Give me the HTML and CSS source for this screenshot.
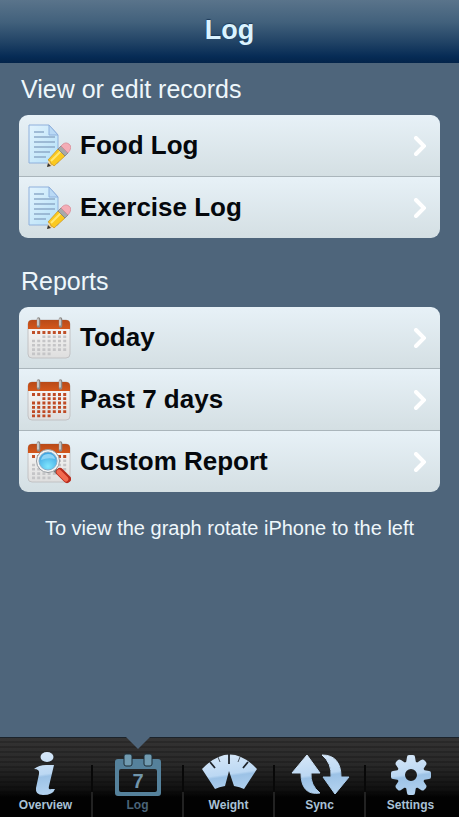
FILE: index.html
```html
<!doctype html>
<html lang="en">
  <head>
    <meta charset="utf-8">
    <meta name="viewport" content="width=device-width, initial-scale=1">
    <title>Log</title>
    <link rel="stylesheet" href="styles.css">
  </head>
  <body>
    <!-- shared drawings -->
    <svg class="defs" width="0" height="0" aria-hidden="true">
      <defs>
        <linearGradient id="paper" x1="0" y1="0" x2="1" y2="1">
          <stop offset="0" stop-color="#e2f3fd"/>
          <stop offset="1" stop-color="#b4e0f8"/>
        </linearGradient>
        <linearGradient id="orange" x1="0" y1="0" x2="0" y2="1">
          <stop offset="0" stop-color="#b84a18"/>
          <stop offset="1" stop-color="#d4571b"/>
        </linearGradient>
        <linearGradient id="page" x1="0" y1="0" x2="0" y2="1">
          <stop offset="0" stop-color="#fbfaf9"/>
          <stop offset="1" stop-color="#dedede"/>
        </linearGradient>
        <radialGradient id="lens" cx=".5" cy=".8" r=".8">
          <stop offset="0" stop-color="#7fe6fd"/>
          <stop offset="1" stop-color="#3a9fe0"/>
        </radialGradient>
        <linearGradient id="glyph" gradientUnits="userSpaceOnUse" x1="26" y1="2" x2="32" y2="44">
          <stop offset="0" stop-color="#d6e7f8"/>
          <stop offset=".5" stop-color="#bcd8f3"/>
          <stop offset=".56" stop-color="#9cc2e6"/>
          <stop offset="1" stop-color="#b4d3f0"/>
        </linearGradient>
        <symbol id="note" viewBox="0 0 44 44">
          <path d="M2 1h20l9 10v28H2z" fill="url(#paper)" stroke="#8fb0dc"/>
          <path d="M22 1v10h9z" fill="#b9d9f5" stroke="#8fb0dc" stroke-linejoin="round"/>
          <path d="M7 8h10M7 13h21M7 18h21M7 23h21M7 28h16M7 33h12" stroke="#8dabc9" stroke-width="1.3" fill="none"/>
          <path d="M20 43l2-8 7 6z" fill="#f3d6a0"/>
          <path d="M20 43l1-4 3 3z" fill="#333"/>
          <path d="M21 36L31 25l7 7-11 10q-1-2-3-2 0-3-3-4z" fill="#fbc91f" stroke="#c8901c" stroke-width=".7"/>
          <path d="M24 37l10-10" stroke="#ffe873" stroke-width="2"/>
          <path d="M31 25l3-3 7 7-3 3z" fill="#a8a9aa" stroke="#77797c" stroke-width=".7"/>
          <path d="M34 22q4-5 8-2t-1 9z" fill="#f4adb6" stroke="#d98590" stroke-width=".7"/>
        </symbol>
        <symbol id="calendar" viewBox="0 0 44 44">
          <rect x="1" y="4" width="42" height="38" rx="4" fill="url(#page)" stroke="#c2c2c4"/>
          <path d="M1 13V8q0-4 4-4h34q4 0 4 4v5z" fill="url(#orange)"/>
          <path d="M11.500 3v7M33.500 3v7" stroke="#8c8a88" stroke-width="3.500" stroke-linecap="round"/>
          <path d="M11 3v6M33 3v6" stroke="#dad9d8" stroke-width="1.500" stroke-linecap="round"/>
        </symbol>
        <symbol id="today" viewBox="0 0 44 44">
          <use href="#calendar"/>
          <path d="M5 16.500h35" stroke="#c04f27" stroke-width="3" stroke-dasharray="3 2.200"/>
          <path d="M15.400 20.700H40M5 25h35M5 29.300h35M5 33.600h35M5 37.900h19" stroke="#c5c5c7" stroke-width="2.600" stroke-dasharray="3 2.200"/>
        </symbol>
        <symbol id="week" viewBox="0 0 44 44">
          <use href="#calendar"/>
          <path d="M5 16.500h35M15.400 20.700H40M5 25h35M5 29.300h35M5 33.600h35M5 37.900h19" stroke="#bf4a24" stroke-width="2.800" stroke-dasharray="3 2.200"/>
        </symbol>
        <symbol id="custom" viewBox="0 0 44 44">
          <use href="#today"/>
          <path d="M27 29l4 4" stroke="#777" stroke-width="4"/>
          <path d="M33 32l7 7" stroke="#b82c1d" stroke-width="8" stroke-linecap="round"/>
          <path d="M32 32l7 7" stroke="#f26a50" stroke-width="5" stroke-linecap="round"/>
          <circle cx="21" cy="21" r="11.500" fill="#f4f4f4" stroke="#959a9f"/>
          <circle cx="21" cy="21" r="9" fill="url(#lens)" stroke="#82aecb"/>
          <path d="M14 20q1-6 7-6 6 0 7 5-7-2-14 1z" fill="#8fd4f6"/>
        </symbol>
      </defs>
    </svg>

    <header>
      <h1>Log</h1>
    </header>

    <main>
      <h2>View or edit records</h2>
      <ul class="list">
        <li><a href="#food"><svg class="icon"><use href="#note"/></svg>Food Log<svg class="chevron" viewBox="0 0 12 20"><path d="M2 2l8 8-8 8"/></svg></a></li>
        <li><a href="#exercise"><svg class="icon"><use href="#note"/></svg>Exercise Log<svg class="chevron" viewBox="0 0 12 20"><path d="M2 2l8 8-8 8"/></svg></a></li>
      </ul>

      <h2 class="next">Reports</h2>
      <ul class="list">
        <li><a href="#today-report"><svg class="icon"><use href="#today"/></svg>Today<svg class="chevron" viewBox="0 0 12 20"><path d="M2 2l8 8-8 8"/></svg></a></li>
        <li><a href="#week-report"><svg class="icon"><use href="#week"/></svg>Past 7 days<svg class="chevron" viewBox="0 0 12 20"><path d="M2 2l8 8-8 8"/></svg></a></li>
        <li><a href="#custom-report"><svg class="icon"><use href="#custom"/></svg>Custom Report<svg class="chevron" viewBox="0 0 12 20"><path d="M2 2l8 8-8 8"/></svg></a></li>
      </ul>

      <p class="hint">To view the graph rotate iPhone to the left</p>
    </main>

    <nav>
      <a href="#overview">
        <svg viewBox="0 0 60 46" fill="url(#glyph)">
          <ellipse cx="31" cy="6" rx="6.500" ry="5"/>
          <path d="M18 18q5-4 12-4h8l-5 21q-1 4 2 3h4q-2 6-12 6-8 0-7-7l3-14q1-5-5-5z"/>
        </svg>
        Overview
      </a>
      <a href="#log" class="active">
        <svg viewBox="0 0 60 46">
          <path fill-rule="evenodd" d="M10 8h40q3 0 3 3v31q0 3-3 3H10q-3 0-3-3V11q0-3 3-3zm3 10q-2 0-2 2v19q0 2 2 2h34q2 0 2-2V20q0-2-2-2z" fill="#55819b"/>
          <rect x="16" y="3" width="8" height="12" rx="2" fill="#719bb0" stroke="#1d2d37"/>
          <rect x="36" y="3" width="8" height="12" rx="2" fill="#719bb0" stroke="#1d2d37"/>
          <text class="day" x="30" y="37" text-anchor="middle">7</text>
        </svg>
        Log
      </a>
      <a href="#weight">
        <svg viewBox="0 0 60 46">
          <path d="M3 18Q31-11 58 18L45 38q-4-2-10-3L30 20l-4 15q-6 1-10 3z" fill="url(#glyph)"/>
          <path d="M11 11l5 6M49 11l-5 6M30 3v10" stroke="#20242a" stroke-width="1.800"/>
          <path d="M19 6l2 5M41 6l-2 5" stroke="#4b5560"/>
        </svg>
        Weight
      </a>
      <a href="#sync">
        <svg viewBox="0 0 60 46" fill="url(#glyph)">
          <path d="M17 4l13 18h-9q-1 12 9 20-19 3-19-20H2z" stroke="url(#glyph)" stroke-linejoin="round"/>
          <path d="M32 4q19 0 19 22h8L45 43 33 26h8q1-14-9-22z" stroke="url(#glyph)" stroke-linejoin="round"/>
        </svg>
        Sync
      </a>
      <a href="#settings">
        <svg viewBox="0 0 60 46" fill="url(#glyph)">
          <path d="M26 6q0-2 2-2h4q2 0 2 2l1 6h-10zM26 42q0 2 2 2h4q2 0 2-2l1-6h-10zM12 20q-2 0-2 2v4q0 2 2 2l6 1V19zM48 20q2 0 2 2v4q0 2-2 2l-6 1V19z"/>
          <path d="M20 9q-2-1-3 0l-2 2q-1 2 0 3l4 6 7-7zM40 9q2-1 3 0l2 2q1 2 0 3l-4 6-7-7zM20 39q-2 1-3 0l-2-2q-1-2 0-3l4-6 7 7zM40 39q2 1 3 0l2-2q1-2 0-3l-4-6-7 7z"/>
          <circle cx="30" cy="24" r="10" fill="none" stroke="url(#glyph)" stroke-width="8"/>
        </svg>
        Settings
      </a>
    </nav>
  </body>
</html>
```
FILE: styles.css
```css
* {
  box-sizing: border-box;
}
body {
  margin: 0;
  min-height: 100vh;
  display: flex;
  flex-direction: column;
  background: #4e657b;
  color: #eef7fb;
  font-family: "Liberation Sans", Arial, sans-serif;
}
a {
  color: inherit;
  text-decoration: none;
}
.defs {
  position: absolute;
}

header {
  height: 63px;
  background: linear-gradient(#5a748b, #42617c 35%, #234567 65%, #062b55 90%, #03244a);
  text-align: center;
}
h1 {
  margin: 0;
  color: #daf3ff;
  font-size: 27px;
  line-height: 61px;
  text-shadow: 0 -1px 1px #1c3958;
}

main {
  flex: 1;
  padding: 0 19px;
}
h2 {
  margin: 0 2px;
  font-size: 25px;
  font-weight: normal;
  line-height: 52px;
}
.next {
  margin-top: 17px;
}

.list {
  margin: 0;
  padding: 0;
  list-style: none;
  border-radius: 9px;
  overflow: hidden;
  color: #05080c;
}
.list li + li {
  border-top: 1px solid #aab5bb;
}
.list a {
  display: flex;
  align-items: center;
  height: 61px;
  padding: 0 14px 0 8px;
  background: linear-gradient(#e7f1f7, #d4dfe3);
  font-size: 26px;
  font-weight: bold;
}
.icon {
  width: 44px;
  height: 44px;
  margin-right: 9px;
}
.chevron {
  width: 12px;
  height: 20px;
  margin-left: auto;
  fill: none;
  stroke: #fff;
  stroke-width: 4;
  stroke-linecap: round;
}
.hint {
  margin: 24px 0 0;
  font-size: 20px;
  line-height: 24px;
  text-align: center;
}

nav {
  display: grid;
  grid-template-columns: repeat(5, 1fr);
  height: 80px;
  padding-right: 4px;
  border-top: 1px solid #1b232b;
  background:
    repeating-linear-gradient(transparent 0 3px, #00000030 3px 5px),
    linear-gradient(#343333, #282828 35%, #101010 65%, #020202 75%);
}
nav a {
  position: relative;
  display: flex;
  flex-direction: column;
  align-items: center;
  padding-top: 13px;
  color: #a9c1d6;
  font-size: 12px;
  font-weight: bold;
  line-height: 16px;
}
nav svg {
  width: 60px;
  height: 46px;
}
nav a + a {
  border-left: 2px solid;
  border-image: linear-gradient(transparent 34%, #080808 34% 68%, #222 68%) 1;
}
nav .active {
  color: #4a6478;
}
/* notch pointing at the current tab */
nav .active::before {
  content: "";
  position: absolute;
  top: -1px;
  left: 50%;
  margin-left: -12px;
  border: 12px solid transparent;
  border-top-color: #4e657b;
  border-bottom: 0;
}
.day {
  fill: #7195ab;
  font-size: 20px;
  font-weight: bold;
}
```
